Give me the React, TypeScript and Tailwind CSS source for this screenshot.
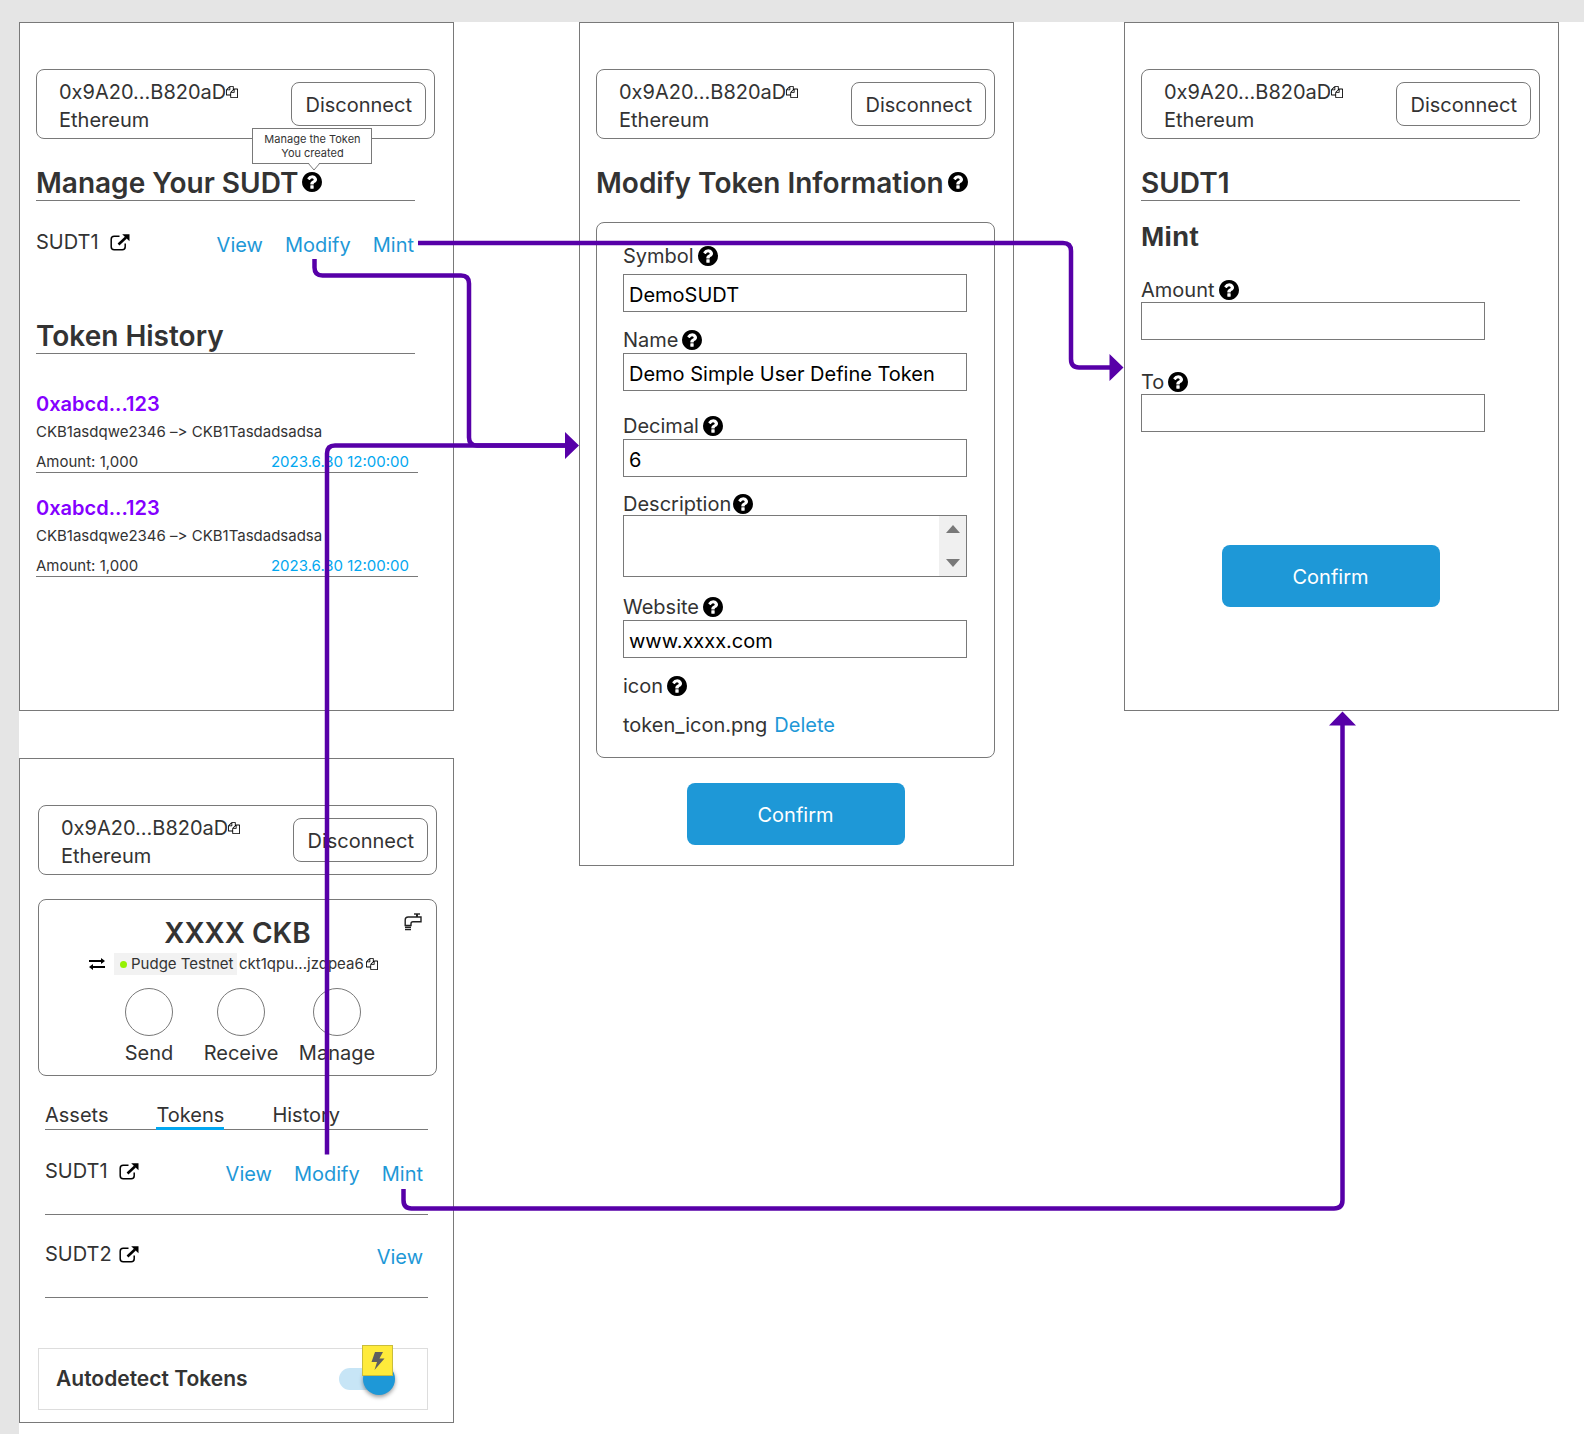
import { useState, type ReactNode } from "react";

function CopyIcon() {
  return (
    <svg viewBox="0 0 1792 1792" className="size-3 shrink-0" fill="currentColor" aria-hidden="true">
      <path d="M1696 384q40 0 68 28t28 68v1216q0 40-28 68t-68 28h-960q-40 0-68-28t-28-68v-288h-544q-40 0-68-28t-28-68v-672q0-40 20-88t48-76l408-408q28-28 76-48t88-20h416q40 0 68 28t28 68v328q68-40 128-40h416zm-544 213l-299 299h299v-299zm-640-384l-299 299h299v-299zm196 647l316-316v-416h-384v416q0 40-28 68t-68 28h-416v640h512v-256q0-40 20-88t48-76zm956 804v-1152h-384v416q0 40-28 68t-68 28h-416v640h896z" />
    </svg>
  );
}

function QuestionIcon() {
  return (
    <svg viewBox="128 128 1536 1536" className="size-5" fill="currentColor" aria-hidden="true">
      <path d="M1024 1376v-192q0-14-9-23t-23-9h-192q-14 0-23 9t-9 23v192q0 14 9 23t23 9h192q14 0 23-9t9-23zm256-672q0-88-55.500-163t-138.500-116-170-41q-243 0-371 213-15 24 8 42l132 100q7 6 19 6 16 0 25-12 53-68 86-92 34-24 86-24 48 0 85.500 26t37.500 59q0 38-20 61t-68 45q-63 28-115.500 86.500t-52.500 125.500v36q0 14 9 23t23 9h192q14 0 23-9t9-23q0-19 21.500-49.500t54.500-49.500q32-18 49-28.500t46-35 44.500-48 28-60.500 12.500-81zm384 192q0 209-103 385.500t-279.500 279.500-385.500 103-385.500-103-279.500-279.500-103-385.500 103-385.500 279.500-279.500 385.500-103 385.500 103 279.500 279.500 103 385.500z" />
    </svg>
  );
}

function ExternalIcon() {
  return (
    <svg viewBox="0 0 20 17" className="h-[17px] w-5 shrink-0" fill="none" stroke="#000" aria-hidden="true">
      <path d="M9.500 2.200H4.200Q1.200 2.200 1.200 5.200V12.800Q1.200 15.800 4.200 15.800H12.200Q15.200 15.800 15.200 12.800V9.500" strokeWidth="1.500" />
      <path d="M8.500 10.500L16 3.500" strokeWidth="2.600" />
      <path d="M12.200 0.300H19.500V7.300Z" fill="#000" stroke="none" />
    </svg>
  );
}

function SwapIcon() {
  return (
    <svg viewBox="0 0 16 12" className="h-3 w-4" fill="none" stroke="#000" strokeWidth="2" aria-hidden="true">
      <path d="M0 3H13M3 9H16" />
      <path d="M12 0L16 3L12 6ZM4 6L0 9L4 12Z" fill="#000" stroke="none" />
    </svg>
  );
}

function FaucetIcon() {
  return (
    <svg viewBox="0 0 18 18" className="size-[18px]" fill="none" stroke="#222" strokeWidth="1.400" aria-hidden="true">
      <path d="M10 1H16" />
      <path d="M13 1V4" strokeWidth="2" />
      <path d="M17 4V8.800H9Q7 8.800 7 10.800V12.500H1.200V7Q1.200 4 4.200 4Z" />
      <path d="M1 14.300H7M1 16.600H7" strokeWidth="1.500" />
    </svg>
  );
}

function Help({ label }: { label: string }) {
  return (
    <button type="button" aria-label={label} className="shrink-0 text-black">
      <QuestionIcon />
    </button>
  );
}

function Board({ className, children }: { className: string; children: ReactNode }) {
  return <section className={`border border-[#797979] bg-white pt-[46px] ${className}`}>{children}</section>;
}

function Account() {
  return (
    <header className="flex items-center justify-between rounded-lg border border-[#797979] py-1 pr-2 pl-[22px]">
      <div className="pt-1 text-xl leading-7">
        <div className="flex items-center">
          0x9A20...B820aD
          <button type="button" aria-label="Copy address" className="text-black">
            <CopyIcon />
          </button>
        </div>
        <div>Ethereum</div>
      </div>
      <button type="button" className="rounded-lg border border-[#797979] px-[13px] pt-2 pb-[6px] text-xl leading-7">
        Disconnect
      </button>
    </header>
  );
}

function Heading({ children }: { children: ReactNode }) {
  return (
    <h2 className="mt-7 mr-5 flex items-center gap-1 border-b border-[#797979] text-[28px] leading-[33px] font-semibold">
      {children}
    </h2>
  );
}

function TokenRow({ name, actions }: { name: string; actions: string[] }) {
  return (
    <div className="flex justify-between text-xl leading-7">
      <div className="flex h-7 items-center gap-2">
        <span className="w-[66px]">{name}</span>
        <a href="#explorer" aria-label={`Open ${name}`}>
          <ExternalIcon />
        </a>
      </div>
      <nav className="flex gap-[22px] pt-[3px] pr-px text-[#1e98d7]">
        {actions.map((a) => (
          <a key={a} href={`#${a.toLowerCase()}`}>
            {a}
          </a>
        ))}
      </nav>
    </div>
  );
}

function HistoryEntry({ className }: { className: string }) {
  return (
    <article className={`mr-[17px] ${className}`}>
      <h3 className="text-xl leading-7 font-semibold text-[#8400ff]">0xabcd...123</h3>
      <p className="mt-[2px] text-[15px] leading-6 [font-feature-settings:'calt'_0]">CKB1asdqwe2346 –&gt; CKB1Tasdadsadsa</p>
      <div className="mt-[7px] flex justify-between border-b border-[#797979] pr-[9px] text-[15px] leading-[21px]">
        <span>Amount: 1,000</span>
        <time className="text-[#02a7f0]">2023.6.30 12:00:00</time>
      </div>
    </article>
  );
}

function Field({ id, label, value = "", className, gap = "gap-px" }: { id: string; label: string; value?: string; className: string; gap?: string }) {
  return (
    <div className={`flex flex-col ${gap} ${className}`}>
      <div className="flex items-center gap-1 text-xl leading-6">
        <label htmlFor={id}>{label}</label>
        <Help label={`About ${label}`} />
      </div>
      <input id={id} defaultValue={value} className="h-[38px] w-full border border-[#797979] px-[5px] pt-1 text-xl text-black" />
    </div>
  );
}

function Confirm({ className }: { className: string }) {
  return (
    <button type="button" className={`block h-[62px] w-[218px] rounded-lg bg-[#1e98d7] pt-[2px] text-xl text-white ${className}`}>
      Confirm
    </button>
  );
}

function ManageBoard() {
  return (
    <Board className="pr-[18px] pb-[133px] pl-4">
      <Account />
      <Heading>
        Manage Your SUDT
        <span className="relative mb-[3px] flex">
          <Help label="About managing tokens" />
          <span role="tooltip" className="absolute bottom-full left-1/2 mb-2 w-[120px] -translate-x-1/2 border border-[#797979] bg-white py-[3px] text-center text-[11px] leading-[14px] font-normal">
            Manage the Token
            <br />
            You created
            <svg viewBox="0 0 14 9" className="absolute top-full left-1/2 -mt-px ml-[-5px] h-[9px] w-[14px]" aria-hidden="true">
              <path d="M1 0H13L7 8Z" fill="#fff" />
              <path d="M1 1L7 8L13 1" fill="none" stroke="#797979" />
            </svg>
          </span>
        </span>
      </Heading>
      <div className="mt-[27px] mr-5">
        <TokenRow name="SUDT1" actions={["View", "Modify", "Mint"]} />
      </div>
      <h2 className="mt-[60px] mr-5 border-b border-[#797979] text-[28px] leading-[34px] font-semibold">Token History</h2>
      <HistoryEntry className="mt-9" />
      <HistoryEntry className="mt-[21px]" />
    </Board>
  );
}

function WalletBoard() {
  const [tab, setTab] = useState("Tokens");
  return (
    <Board className="pr-4 pb-3 pl-[18px]">
      <Account />
      <div className="relative mt-6 rounded-lg border border-[#797979] pt-4 pb-2">
        <button type="button" aria-label="Faucet" className="absolute top-[13px] right-[14px]">
          <FaucetIcon />
        </button>
        <h2 className="text-center text-[28px] leading-[35px] font-semibold">XXXX CKB</h2>
        <div className="mt-[2px] flex h-[22px] items-center pl-[50px] text-[15px] leading-[22px]">
          <button type="button" aria-label="Switch network">
            <SwapIcon />
          </button>
          <span className="ml-[9px] flex w-[123px] items-center gap-1 bg-[#f2f2f2] pl-[6px]">
            <span className="size-[7px] rounded-full bg-[#95f204]" />
            Pudge Testnet
          </span>
          <span className="mr-[2px] ml-[2px]">ckt1qpu...jzdpea6</span>
          <button type="button" aria-label="Copy CKB address" className="text-black">
            <CopyIcon />
          </button>
        </div>
        <div className="mt-[13px] grid grid-cols-[72px_72px_80px] gap-5 pl-[74px]">
          {["Send", "Receive", "Manage"].map((a) => (
            <button key={a} type="button" className="flex flex-col items-center gap-[3px] text-xl leading-7">
              <span className="size-12 rounded-full border border-[#797979]" />
              {a}
            </button>
          ))}
        </div>
      </div>
      <div className="mr-[9px] ml-[7px]">
        <div role="tablist" className="mt-[25px] flex gap-12 border-b border-[#797979] text-xl leading-7">
          {["Assets", "Tokens", "History"].map((t) => (
            <button
              key={t}
              type="button"
              role="tab"
              aria-selected={tab === t}
              onClick={() => setTab(t)}
              className={tab === t ? "relative after:absolute after:inset-x-0 after:-bottom-px after:h-[3px] after:bg-[#02a7f0]" : ""}
            >
              {t}
            </button>
          ))}
        </div>
        <div className="border-b border-[#797979] pt-[27px] pr-1 pb-[26px]">
          <TokenRow name="SUDT1" actions={["View", "Modify", "Mint"]} />
        </div>
        <div className="border-b border-[#797979] pt-[25px] pr-1 pb-[26px]">
          <TokenRow name="SUDT2" actions={["View"]} />
        </div>
      </div>
      <label className="mt-[50px] mr-[9px] flex h-[62px] items-center justify-between border border-[#ddd] pr-8 pl-[17px] text-[21px] font-semibold">
        Autodetect Tokens
        <span className="relative flex h-8 w-14 items-center">
          <input type="checkbox" role="switch" defaultChecked className="peer sr-only" />
          <span className="h-[22px] w-12 rounded-full bg-[#c7e5f6]" />
          <span className="absolute left-0 size-8 rounded-full bg-[#1e98d7] shadow-[0_2px_4px_rgba(0,0,0,0.4)] peer-checked:left-6" />
          <span className="absolute -top-[18px] left-[23px] flex size-[31px] items-center justify-center border border-[#c9bd3c] bg-[#ffeb3b]">
            <svg viewBox="0 0 14 18" className="h-[18px] w-[14px]" fill="#5f5f5f" aria-hidden="true">
              <path d="M4 0H12L8.500 6.500H13.500L3.500 18L6 10H0.500Z" />
            </svg>
          </span>
        </span>
      </label>
    </Board>
  );
}

function ModifyBoard() {
  return (
    <Board className="pr-[18px] pb-5 pl-4">
      <Account />
      <h2 className="mt-7 flex items-center gap-1 text-[28px] leading-[33px] font-semibold">
        Modify Token Information
        <span className="mb-[3px] flex">
          <Help label="About token information" />
        </span>
      </h2>
      <form className="mt-[22px] rounded-lg border border-[#797979] pt-[21px] pr-[27px] pb-5 pl-[26px]">
        <Field id="symbol" label="Symbol" value="DemoSUDT" className="" gap="gap-[6px]" />
        <Field id="name" label="Name" value="Demo Simple User Define Token" className="mt-4" />
        <Field id="decimal" label="Decimal" value="6" className="mt-[23px]" />
        <div className="mt-4">
          <div className="flex items-center gap-[2px] text-xl leading-[22px]">
            <label htmlFor="description">Description</label>
            <Help label="About Description" />
          </div>
          <div className="flex h-[62px] border border-[#797979]">
            <textarea id="description" className="min-w-0 flex-1 resize-none overflow-hidden px-[5px] text-xl text-black" />
            <div className="flex w-[27px] flex-col items-center justify-between bg-[#f0f0f0] py-[9px]">
              <svg viewBox="0 0 14 8" className="h-2 w-[14px]" fill="#797979" aria-hidden="true">
                <path d="M0 8L7 0L14 8Z" />
              </svg>
              <svg viewBox="0 0 14 8" className="h-2 w-[14px]" fill="#797979" aria-hidden="true">
                <path d="M0 0H14L7 8Z" />
              </svg>
            </div>
          </div>
        </div>
        <Field id="website" label="Website" value="www.xxxx.com" className="mt-[18px]" />
        <div className="mt-4 flex items-center gap-1 text-xl leading-6">
          icon
          <Help label="About icon" />
        </div>
        <div className="mt-[15px] flex gap-[7px] text-xl leading-6">
          token_icon.png
          <button type="button" className="text-[#1e98d7]">
            Delete
          </button>
        </div>
      </form>
      <Confirm className="mx-auto mt-[25px]" />
    </Board>
  );
}

function MintBoard() {
  return (
    <Board className="pr-[18px] pb-[103px] pl-4">
      <Account />
      <Heading>SUDT1</Heading>
      <form className="mr-5">
        <h3 className="mt-[18px] font-['Liberation_Sans',sans-serif] text-[28px] leading-[35px] font-bold">Mint</h3>
        <Field id="amount" label="Amount" className="mt-6 mr-[35px]" gap="gap-0" />
        <Field id="to" label="To" className="mt-[30px] mr-[35px]" gap="gap-0" />
        <Confirm className="mx-auto mt-[113px]" />
      </form>
    </Board>
  );
}

/* Connectors drawn over the boards, from each action to the screen it opens. */
function Connectors() {
  return (
    <svg viewBox="0 0 1584 1434" preserveAspectRatio="none" className="pointer-events-none absolute inset-0 h-full w-full" fill="none" stroke="#5700a8" strokeWidth="4.500" aria-hidden="true">
      <path d="M418 243H1063Q1071 243 1071 251V359Q1071 367.500 1079 367.500H1112" />
      <path d="M314.500 259V267.500Q314.500 275.500 322.500 275.500H461Q469 275.500 469 283.500V437.500Q469 445.500 477 445.500H568" />
      <path d="M327 1154.500V453.500Q327 445.500 335 445.500H568" />
      <path d="M403.500 1189V1200Q403.500 1208.500 411.500 1208.500H1334Q1342.500 1208.500 1342.500 1200V722" />
      <path d="M1109.500 354L1123.500 367.500L1109.500 381ZM565 432L579 445.500L565 459ZM1329 725.500L1342.500 711.500L1356 725.500Z" fill="#5700a8" stroke="none" />
    </svg>
  );
}

export default function App() {
  return (
    <main className="relative flex min-h-screen min-w-[1584px] flex-col bg-[#e5e5e5] pt-[22px] pl-[19px] font-['Inter','Liberation_Sans',sans-serif] text-[#333]">
      <div className="grid grow grid-cols-[435fr_125fr_435fr_110fr_435fr_25fr] items-start bg-white">
        <div className="col-start-1 flex flex-col gap-[47px]">
          <ManageBoard />
          <WalletBoard />
        </div>
        <div className="col-start-3">
          <ModifyBoard />
        </div>
        <div className="col-start-5">
          <MintBoard />
        </div>
      </div>
      <Connectors />
    </main>
  );
}
